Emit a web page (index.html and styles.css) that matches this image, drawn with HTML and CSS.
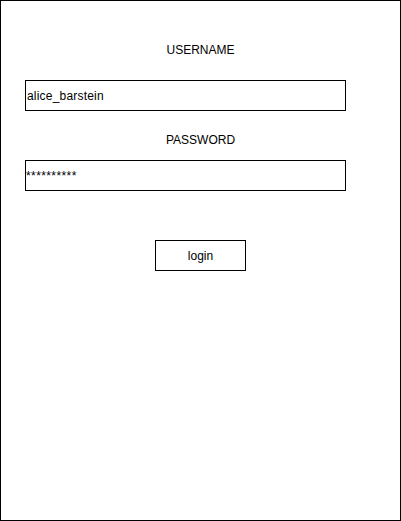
FILE: index.html
```html
<!DOCTYPE html>
<html>
<head>
<meta charset="utf-8">
<link rel="stylesheet" href="styles.css">
</head>
<body>
<div class="frame">
  <div class="label label-user">USERNAME</div>
  <div class="field field-user">alice_barstein</div>
  <div class="label label-pass">PASSWORD</div>
  <div class="field field-pass">**********</div>
  <div class="button">login</div>
</div>
</body>
</html>
```
FILE: styles.css
```css
html, body {
  margin: 0;
  padding: 0;
  background: #ffffff;
}
.frame {
  box-sizing: border-box;
  width: 401px;
  height: 521px;
  border: 1px solid #000000;
  padding-top: 42px;
  display: flex;
  flex-direction: column;
  font-family: "Liberation Sans", Arial, sans-serif;
  font-size: 12px;
  line-height: 14px;
  color: #000000;
}
.label {
  text-align: center;
  height: 14px;
}
.label-user {
  margin-bottom: 23px;
}
.label-pass {
  margin-top: 22px;
  margin-bottom: 13px;
}
.field {
  box-sizing: border-box;
  width: 321px;
  height: 31px;
  margin-left: 24px;
  border: 1px solid #000000;
  padding-left: 1px;
  display: flex;
  align-items: center;
}
.field-user {
  letter-spacing: 0.2px;
}
.field-pass {
  padding-left: 0;
  letter-spacing: 0.4px;
}
.button {
  box-sizing: border-box;
  align-self: center;
  width: 91px;
  height: 31px;
  margin-top: 49px;
  border: 1px solid #000000;
  display: flex;
  align-items: center;
  justify-content: center;
}
```
